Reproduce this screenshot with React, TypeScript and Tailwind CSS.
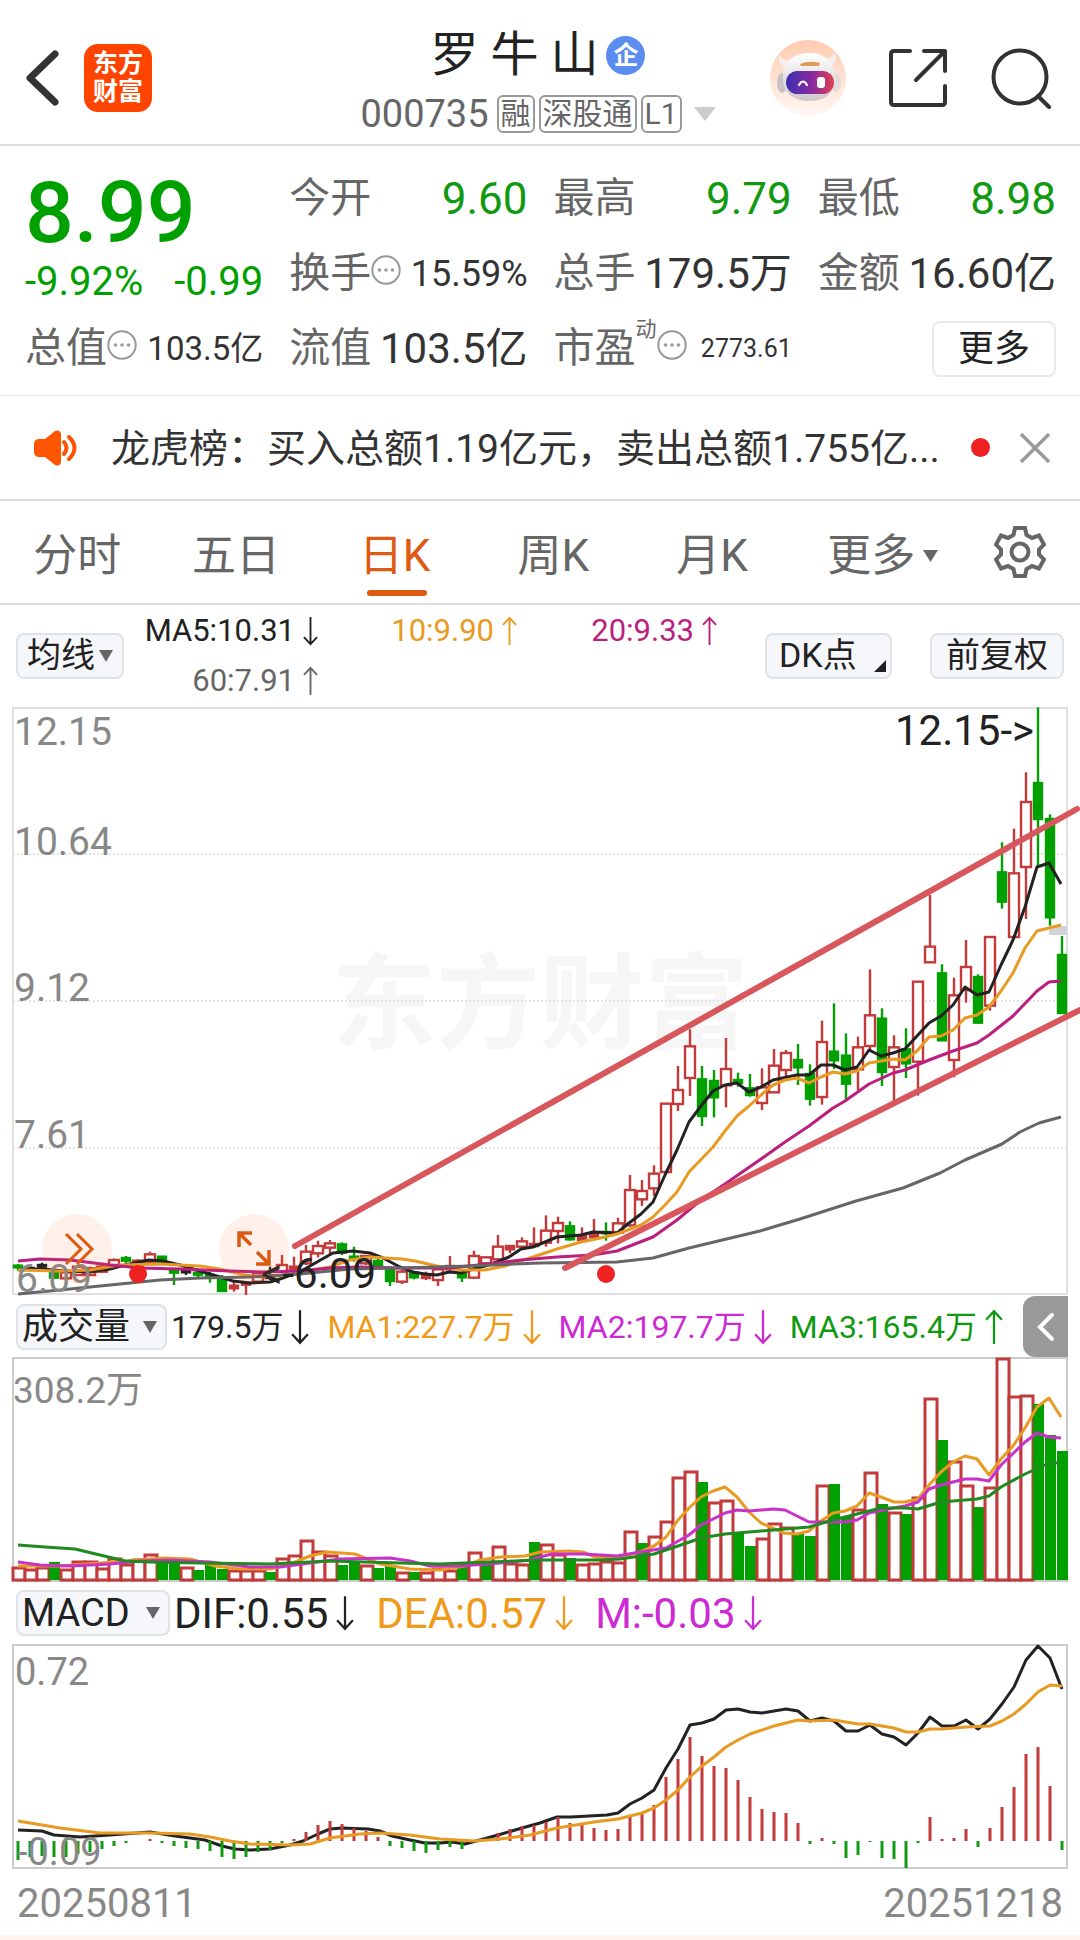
import React from 'react';
import clsx from 'clsx';

type Point = [number, number];

// body top, body bottom, high, low, all in thirds of a pixel; colour r/g/k
type Candle = [number, number, number, number, 'r' | 'g' | 'k'];

const RED = '#c23a3a';
const GREEN = '#00a000';
const INK = '#222222';
const ORANGE = '#e89a22';
const PINK = '#bb1e7e';
const VIOLET = '#c832c8';
const CHART_FONT = 'Roboto, "Noto Sans CJK SC", sans-serif';

const barX = (i: number) => 18 + i * 12;

// candles 0-31, offset 3450; 32-61, offset 3000; 62-87, offset 2100
const EARLY: Candle[] = [
  [347, 352, 342, 362, 'g'], [354, 359, 350, 364, 'k'], [345, 350, 338, 356, 'k'], [365, 383, 360, 385, 'g'],
  [367, 385, 360, 388, 'r'], [350, 375, 345, 378, 'r'], [355, 375, 350, 378, 'r'], [350, 365, 345, 368, 'r'],
  [330, 345, 325, 350, 'r'], [324, 332, 318, 340, 'g'], [332, 350, 328, 352, 'r'], [313, 335, 305, 340, 'r'],
  [320, 338, 318, 342, 'g'], [362, 368, 355, 405, 'g'], [362, 367, 352, 375, 'k'], [368, 374, 360, 385, 'g'],
  [375, 382, 365, 398, 'g'], [388, 423, 375, 425, 'g'], [407, 415, 395, 425, 'r'], [398, 404, 395, 435, 'r'],
  [370, 395, 365, 400, 'r'], [378, 384, 350, 390, 'k'], [345, 365, 315, 370, 'r'], [350, 362, 320, 370, 'r'],
  [305, 340, 285, 345, 'r'], [288, 310, 272, 322, 'r'], [280, 293, 270, 315, 'r'], [283, 308, 277, 315, 'g'],
  [320, 326, 290, 335, 'g'], [318, 340, 315, 345, 'r'], [333, 350, 325, 355, 'g'], [360, 393, 350, 408, 'g'],
];

const MIDDLE: Candle[] = [
  [815, 845, 810, 852, 'r'], [818, 832, 815, 838, 'g'], [828, 834, 815, 840, 'r'], [808, 840, 805, 858, 'r'],
  [798, 808, 768, 820, 'r'], [820, 832, 815, 846, 'g'], [768, 833, 752, 835, 'r'], [772, 790, 770, 795, 'r'],
  [740, 778, 705, 785, 'r'], [738, 748, 735, 760, 'r'], [724, 740, 712, 750, 'r'], [732, 738, 682, 740, 'r'],
  [692, 728, 646, 740, 'r'], [669, 693, 650, 730, 'r'], [679, 718, 664, 722, 'g'], [708, 720, 682, 722, 'r'],
  [703, 712, 657, 715, 'r'], [696, 700, 667, 722, 'g'], [670, 698, 653, 700, 'r'], [570, 676, 525, 680, 'r'],
  [573, 598, 540, 618, 'r'], [521, 565, 496, 588, 'r'], [311, 516, 311, 516, 'r'], [270, 312, 198, 333, 'r'],
  [139, 234, 88, 288, 'r'], [238, 348, 198, 378, 'g'], [243, 292, 210, 352, 'g'], [207, 256, 114, 322, 'r'],
  [240, 249, 218, 260, 'g'], [265, 285, 222, 290, 'g'],
];

const LATE: Candle[] = [
  [1162, 1209, 1105, 1230, 'r'], [1097, 1177, 1047, 1177, 'r'], [1059, 1110, 1050, 1135, 'r'], [1080, 1102, 1032, 1155, 'g'],
  [1122, 1196, 1093, 1217, 'g'], [1026, 1191, 962, 1214, 'r'], [1055, 1081, 910, 1107, 'g'], [1067, 1151, 1000, 1202, 'g'],
  [1042, 1108, 1010, 1170, 'r'], [946, 1038, 808, 1050, 'r'], [956, 1116, 925, 1158, 'g'], [1042, 1101, 1006, 1203, 'r'],
  [1048, 1090, 985, 1134, 'g'], [845, 1085, 845, 1187, 'r'], [740, 787, 585, 787, 'r'], [820, 1021, 793, 1021, 'g'],
  [886, 1080, 833, 1132, 'r'], [801, 870, 720, 908, 'r'], [831, 968, 823, 970, 'g'], [711, 917, 711, 932, 'r'],
  [517, 605, 427, 626, 'g'], [520, 711, 386, 711, 'r'], [306, 501, 217, 657, 'r'], [249, 357, 22, 500, 'g'],
  [357, 652, 343, 677, 'g'], [765, 939, 708, 942, 'g'],
];

const shift = (list: Candle[], by: number): Candle[] =>
  list.map(([t, b, h, l, c]) => [(t + by) / 3, (b + by) / 3, (h + by) / 3, (l + by) / 3, c]);

const CANDLES: Candle[] = [...shift(EARLY, 3450), ...shift(MIDDLE, 3000), ...shift(LATE, 2100)];

const MA5: Point[] = [
  [18, 1270], [41, 1269], [66, 1271], [90, 1272], [110, 1269], [125, 1265], [149, 1260], [163, 1261], [180, 1265], [200, 1271],
  [220, 1277], [233, 1281], [250, 1283], [270, 1282], [283, 1278], [303, 1270], [317, 1262], [333, 1253], [353, 1251], [370, 1253],
  [383, 1258], [400, 1267], [413, 1272], [425, 1274], [437, 1275], [449, 1272], [461, 1273], [473, 1269], [485, 1266], [497, 1262],
  [509, 1257], [521, 1249], [533, 1247], [545, 1242], [557, 1237], [581, 1235], [593, 1232], [617, 1233], [629, 1223], [641, 1214],
  [653, 1202], [665, 1175], [677, 1150], [689, 1122], [701, 1106], [713, 1091], [725, 1085], [737, 1083], [749, 1092], [761, 1087],
  [773, 1080], [797, 1075], [809, 1075], [821, 1065], [833, 1065], [845, 1070], [857, 1067], [869, 1050], [881, 1056], [893, 1053],
  [905, 1049], [917, 1036], [929, 1023], [941, 1016], [953, 1005], [965, 987], [977, 995], [989, 992], [1001, 965], [1013, 940],
  [1025, 907], [1037, 867], [1049, 863], [1061, 884],
];

const MA10: Point[] = [
  [18, 1270], [60, 1271], [90, 1270], [120, 1265], [160, 1264], [200, 1266], [220, 1269], [245, 1275], [260, 1277], [290, 1275],
  [300, 1272], [330, 1267], [350, 1260], [370, 1257], [385, 1258], [402, 1259], [415, 1261], [437, 1266], [461, 1270], [485, 1270],
  [505, 1266], [533, 1257], [557, 1249], [581, 1242], [605, 1237], [617, 1234], [641, 1225], [653, 1217], [665, 1205], [677, 1192],
  [689, 1172], [713, 1147], [725, 1131], [737, 1116], [749, 1106], [761, 1095], [773, 1085], [785, 1080], [797, 1078], [809, 1083],
  [821, 1077], [833, 1072], [845, 1074], [857, 1071], [869, 1063], [881, 1061], [893, 1059], [905, 1060], [917, 1051], [929, 1037],
  [941, 1036], [953, 1030], [965, 1018], [977, 1015], [989, 1007], [1001, 991], [1013, 973], [1025, 948], [1037, 931], [1049, 928],
  [1061, 925],
];

const MA20: Point[] = [
  [18, 1261], [40, 1259], [70, 1260], [110, 1265], [140, 1268], [180, 1269], [230, 1271], [260, 1272], [300, 1271], [330, 1268],
  [360, 1267], [400, 1268], [450, 1268], [497, 1263], [521, 1260], [557, 1257], [593, 1255], [617, 1251], [653, 1237], [677, 1220],
  [701, 1200], [725, 1184], [761, 1159], [785, 1142], [809, 1126], [833, 1108], [845, 1101], [869, 1084], [893, 1073], [905, 1070],
  [929, 1060], [953, 1051], [977, 1043], [989, 1035], [1013, 1016], [1037, 991], [1049, 982], [1061, 981],
];

const MA60: Point[] = [
  [18, 1294], [60, 1290], [110, 1285], [160, 1280], [200, 1278], [250, 1277], [300, 1274], [350, 1269], [400, 1268], [470, 1266],
  [540, 1263], [617, 1262], [653, 1258], [689, 1248], [760, 1231], [800, 1219], [856, 1201], [903, 1188], [940, 1173], [965, 1160],
  [1002, 1144], [1020, 1132], [1039, 1123], [1061, 1117],
];

// bar tops, in pixels
const VOLUME: [number, 'r' | 'g'][] = [
  [1567, 'r'], [1569, 'r'], [1567, 'r'], [1562, 'g'], [1569, 'r'], [1561, 'r'], [1561, 'r'], [1568, 'r'], [1558, 'r'], [1564, 'r'],
  [1559, 'r'], [1554, 'r'], [1562, 'g'], [1563, 'g'], [1567, 'r'], [1570, 'g'], [1565, 'g'], [1569, 'g'], [1570, 'r'], [1570, 'r'],
  [1570, 'r'], [1572, 'g'], [1558, 'r'], [1555, 'r'], [1540, 'r'], [1551, 'r'], [1555, 'r'], [1565, 'g'], [1562, 'g'], [1565, 'r'],
  [1568, 'g'], [1565, 'g'], [1572, 'r'], [1572, 'g'], [1572, 'r'], [1568, 'r'], [1570, 'r'], [1562, 'g'], [1552, 'r'], [1563, 'g'],
  [1546, 'r'], [1563, 'r'], [1564, 'r'], [1542, 'g'], [1544, 'r'], [1554, 'r'], [1558, 'g'], [1564, 'r'], [1563, 'r'], [1561, 'r'],
  [1562, 'r'], [1531, 'r'], [1543, 'g'], [1536, 'r'], [1521, 'r'], [1477, 'r'], [1471, 'r'], [1482, 'g'], [1502, 'r'], [1500, 'r'],
  [1533, 'g'], [1546, 'g'], [1538, 'r'], [1523, 'r'], [1527, 'r'], [1534, 'g'], [1536, 'g'], [1485, 'r'], [1484, 'g'], [1517, 'g'],
  [1509, 'r'], [1472, 'r'], [1504, 'g'], [1512, 'r'], [1514, 'g'], [1497, 'r'], [1398, 'r'], [1440, 'g'], [1461, 'r'], [1485, 'r'],
  [1507, 'g'], [1487, 'r'], [1358, 'r'], [1396, 'r'], [1395, 'r'], [1404, 'g'], [1435, 'g'], [1451, 'g'],
];

const VOL_MA1: Point[] = [
  [18, 1566], [60, 1566], [100, 1563], [125, 1561], [150, 1559], [165, 1558], [190, 1559], [215, 1566], [240, 1569], [270, 1569],
  [290, 1564], [310, 1556], [327, 1552], [355, 1554], [380, 1564], [410, 1569], [440, 1570], [465, 1566], [480, 1560], [500, 1557],
  [525, 1556], [540, 1552], [569, 1551], [583, 1552], [595, 1557], [617, 1558], [640, 1552], [654, 1546], [666, 1537], [678, 1520],
  [689, 1508], [701, 1497], [713, 1491], [725, 1487], [737, 1497], [749, 1512], [761, 1523], [784, 1533], [797, 1534], [809, 1531],
  [821, 1521], [833, 1513], [845, 1511], [857, 1506], [869, 1493], [881, 1497], [894, 1502], [905, 1502], [918, 1499], [929, 1485],
  [941, 1472], [953, 1462], [965, 1456], [977, 1459], [989, 1475], [1001, 1459], [1013, 1446], [1025, 1428], [1037, 1407],
  [1049, 1398], [1061, 1417],
];

const VOL_MA2: Point[] = [
  [18, 1562], [40, 1565], [70, 1566], [110, 1564], [140, 1561], [170, 1560], [210, 1562], [250, 1567], [280, 1567], [310, 1563],
  [340, 1559], [390, 1558], [410, 1561], [430, 1566], [460, 1566], [500, 1563], [530, 1560], [540, 1557], [552, 1554], [583, 1554],
  [617, 1556], [640, 1552], [666, 1548], [689, 1535], [701, 1525], [725, 1513], [737, 1510], [749, 1511], [773, 1509], [785, 1510],
  [809, 1522], [833, 1522], [845, 1522], [857, 1520], [869, 1513], [893, 1508], [905, 1506], [918, 1502], [929, 1489], [941, 1485],
  [965, 1479], [977, 1479], [989, 1481], [1001, 1465], [1025, 1442], [1037, 1433], [1049, 1437], [1061, 1438],
];

const VOL_MA3: Point[] = [
  [18, 1545], [45, 1547], [75, 1549], [100, 1555], [125, 1561], [150, 1562], [200, 1563], [270, 1564], [330, 1561], [400, 1563],
  [440, 1564], [490, 1562], [540, 1560], [600, 1560], [620, 1559], [654, 1554], [678, 1546], [701, 1538], [725, 1534], [761, 1531],
  [809, 1527], [833, 1520], [857, 1514], [881, 1508], [905, 1508], [918, 1509], [941, 1502], [977, 1499], [989, 1496], [1001, 1487],
  [1025, 1474], [1045, 1465], [1061, 1462],
];

// bar height above the zero line, in pixels
const MACD_BARS: number[] = [
  -19, -16, -15, -16, -16, -13, -11, -8, -5, -2, 0, 2, -2, -5, -7, -8, -10, -16, -18, -16, -11, -9, -2, 2, 9, 16, 20, 17, 13, 10,
  4, -5, -7, -10, -12, -9, -6, -8, -1, 2, 8, 12, 15, 16, 19, 24, 18, 16, 13, 11, 12, 24, 29, 36, 64, 82, 104, 85, 75, 73, 61, 44,
  32, 29, 28, 18, -3, 3, -3, -17, -14, -1, -17, -18, -27, -2, 24, 2, 3, 12, -6, 13, 34, 54, 87, 94, 55, -9,
];

const DIF: Point[] = [
  [18, 1830], [42, 1831], [54, 1835], [80, 1837], [110, 1835], [150, 1832], [175, 1836], [205, 1840], [222, 1846], [235, 1849],
  [250, 1850], [270, 1849], [290, 1845], [303, 1841], [318, 1834], [330, 1829], [342, 1828], [368, 1829], [380, 1831], [392, 1836],
  [410, 1840], [425, 1843], [440, 1843], [452, 1842], [465, 1844], [480, 1840], [498, 1835], [522, 1828], [540, 1823], [557, 1817],
  [571, 1817], [607, 1815], [618, 1813], [630, 1804], [642, 1798], [654, 1790], [666, 1768], [678, 1749], [690, 1725], [702, 1723],
  [714, 1719], [726, 1710], [738, 1709], [750, 1712], [762, 1713], [786, 1709], [798, 1711], [810, 1721], [822, 1718], [834, 1721],
  [846, 1731], [858, 1731], [870, 1725], [882, 1734], [894, 1737], [906, 1745], [918, 1733], [930, 1717], [942, 1726], [954, 1726],
  [966, 1720], [978, 1729], [990, 1719], [1002, 1704], [1014, 1687], [1026, 1660], [1038, 1646], [1050, 1658], [1062, 1689],
];

const DEA: Point[] = [
  [18, 1821], [60, 1828], [100, 1833], [150, 1833], [190, 1834], [210, 1837], [230, 1841], [250, 1844], [290, 1845], [310, 1844],
  [330, 1838], [360, 1834], [380, 1833], [410, 1835], [440, 1839], [475, 1841], [500, 1839], [530, 1835], [557, 1828], [594, 1822],
  [618, 1819], [642, 1813], [654, 1808], [666, 1800], [678, 1790], [690, 1777], [702, 1766], [714, 1757], [726, 1747], [738, 1740],
  [750, 1734], [774, 1726], [798, 1720], [810, 1721], [834, 1720], [858, 1724], [870, 1724], [894, 1728], [906, 1732], [918, 1732],
  [930, 1729], [942, 1729], [966, 1727], [990, 1726], [1002, 1721], [1014, 1714], [1026, 1704], [1038, 1692], [1050, 1685],
  [1062, 1686],
];

const Line: React.FC<{ points: Point[]; color: string }> = ({ points, color }) => (
  <polyline points={points.map((p) => p.join(',')).join(' ')} fill="none" stroke={color} strokeWidth="3" strokeLinejoin="round" />
);

const Arrow: React.FC<{ up?: boolean; large?: boolean }> = ({ up, large }) => (
  <svg
    viewBox="0 0 16 32"
    className={clsx('shrink-0', large ? 'h-9 w-[18px]' : 'h-[30px] w-[15px]', up && 'rotate-180')}
    fill="none"
    stroke="currentColor"
    strokeWidth="2"
  >
    <path d="M8 1V30M1 22.5L8 30L15 22.5" />
  </svg>
);

const Caret: React.FC<{ className: string }> = ({ className }) => (
  <svg viewBox="0 0 14 12" preserveAspectRatio="none" className={clsx('shrink-0', className)} fill="currentColor">
    <path d="M0 0H14L7 12Z" />
  </svg>
);

const InfoDots: React.FC = () => (
  <svg viewBox="0 0 30 30" className="mb-2 h-[30px] w-[30px] shrink-0 text-[#999]" fill="currentColor">
    <circle cx="15" cy="15" r="13.7" fill="none" stroke="currentColor" strokeWidth="2" />
    <circle cx="8.5" cy="15" r="1.8" />
    <circle cx="15" cy="15" r="1.8" />
    <circle cx="21.5" cy="15" r="1.8" />
  </svg>
);

const Robot: React.FC = () => (
  <svg viewBox="0 0 76 76" className="h-[76px] w-[76px]">
    <defs>
      <linearGradient id="halo" x1="0" y1="0" x2="0" y2="1">
        <stop offset="0" stopColor="#ffcbb0" />
        <stop offset="1" stopColor="#fff8f4" />
      </linearGradient>
      <linearGradient id="visor" x1="0" y1="0" x2="1" y2="0">
        <stop offset="0" stopColor="#3a2fb4" />
        <stop offset="0.55" stopColor="#8a2a9e" />
        <stop offset="1" stopColor="#e0404e" />
      </linearGradient>
      <linearGradient id="shell" x1="0" y1="0" x2="0" y2="1">
        <stop offset="0" stopColor="#ffffff" />
        <stop offset="1" stopColor="#cfc6c8" />
      </linearGradient>
    </defs>
    <circle cx="38" cy="38" r="38" fill="url(#halo)" />
    <path d="M14 28C9 24 8 19 9 15C12 19 15 20 20 21ZM60 27C66 23 67 18 65 13C62 17 59 19 54 20Z" fill="#f3eeee" />
    <ellipse cx="12" cy="43" rx="5" ry="10" fill="#c9c2c6" />
    <ellipse cx="66" cy="43" rx="5" ry="9" fill="#e6d9d9" />
    <path d="M13 36C14 20 25 13 39 13C54 13 64 21 65 36C66 52 56 61 40 61C23 61 12 53 13 36Z" fill="url(#shell)" />
    <path d="M30 24Q40 20 50 23L49 26H31Z" fill="#e09a5c" />
    <rect x="16" y="31" width="48" height="23" rx="11.5" fill="url(#visor)" />
    <path d="M29 45Q33 38 37 45" fill="none" stroke="#fff" strokeWidth="2.2" strokeLinecap="round" />
    <rect x="47" y="37" width="8" height="11" rx="3" fill="#fff" />
  </svg>
);

const Header: React.FC = () => (
  <header className="flex h-[146px] items-center border-b-2 border-[#dcdcdc] pt-5 pr-7 pb-2 pl-6">
    <div className="flex flex-1 items-center gap-6">
      <button aria-label="返回">
        <svg viewBox="0 0 36 56" className="h-14 w-9" fill="none" stroke="#333" strokeWidth="7" strokeLinecap="round" strokeLinejoin="round">
          <path d="M31 4L6 28L31 52" />
        </svg>
      </button>
      <a href="#" className="flex h-[68px] w-[68px] flex-col items-center justify-center rounded-[14px] bg-[#ff4400] text-[25px] leading-[28px] font-bold text-white">
        <span>东方</span>
        <span>财富</span>
      </a>
    </div>
    <div className="flex flex-col items-center gap-3 pt-1">
      <h1 className="flex items-center gap-2 text-[48px] leading-[56px] text-[#222]">
        罗 牛 山
        <span className="flex h-[39px] w-[39px] items-center justify-center rounded-full bg-[#5b8df0] text-[25px] leading-none font-bold text-white">企</span>
      </h1>
      <div className="flex items-center gap-1 text-[30px] leading-[34px] text-[#666]">
        <span className="mr-1 text-[38px]">000735</span>
        <span className="rounded-md border-2 border-[#999] px-[2px]">融</span>
        <span className="rounded-md border-2 border-[#999] px-[2px]">深股通</span>
        <span className="rounded-md border-2 border-[#999] px-[2px]">L1</span>
        <Caret className="ml-2 h-[14px] w-[22px] text-[#ccc]" />
      </div>
    </div>
    <div className="flex flex-1 items-center justify-end gap-[42px]">
      <button aria-label="智能助手">
        <Robot />
      </button>
      <button aria-label="分享">
        <svg viewBox="0 0 60 60" className="h-[60px] w-[60px]" fill="none" stroke="#333" strokeWidth="4" strokeLinecap="round" strokeLinejoin="round">
          <path d="M22 3H6Q3 3 3 6V54Q3 57 6 57H54Q57 57 57 54V38" />
          <path d="M36 3H57V23M57 3L28 32" />
        </svg>
      </button>
      <button aria-label="搜索">
        <svg viewBox="0 0 62 62" className="h-[62px] w-[62px]" fill="none" stroke="#333" strokeWidth="4" strokeLinecap="round">
          <circle cx="30" cy="30" r="26.5" />
          <path d="M48 49L59 60" />
        </svg>
      </button>
    </div>
  </header>
);

interface QuoteProps {
  label: string;
  value: string;
  info?: boolean;
  note?: string;
  valueClass?: string;
}

const Quote: React.FC<QuoteProps> = ({ label, value, info, note, valueClass = 'text-[42px] text-[#333]' }) => (
  <div className="flex h-[75px] items-center whitespace-nowrap">
    <span className="text-[41px] text-[#666]">{label}</span>
    {note && <sup className="-top-5 text-[21px] text-[#666]">{note}</sup>}
    {info && <InfoDots />}
    <span className={clsx('ml-auto', valueClass)}>{value}</span>
  </div>
);

const Quotes: React.FC = () => (
  <section className="grid grid-cols-4 gap-x-[26px] border-b border-[#e6e6e6] pt-[15px] pr-6 pb-[9px] pl-[25px] leading-none">
    <div className="row-span-2 flex flex-col text-[#00a000]">
      <span className="pt-[7px] text-[86px] leading-[90px] font-medium">8.99</span>
      <div className="flex justify-between pt-1 text-[40px]">
        <span>-9.92%</span>
        <span>-0.99</span>
      </div>
    </div>
    <Quote label="今开" value="9.60" valueClass="text-[44px] text-[#119911]" />
    <Quote label="最高" value="9.79" valueClass="text-[44px] text-[#119911]" />
    <Quote label="最低" value="8.98" valueClass="text-[44px] text-[#119911]" />
    <Quote label="换手" value="15.59%" info valueClass="text-[36px] text-[#333]" />
    <Quote label="总手" value="179.5万" />
    <Quote label="金额" value="16.60亿" />
    <Quote label="总值" value="103.5亿" info valueClass="text-[33px] text-[#333]" />
    <Quote label="流值" value="103.5亿" />
    <Quote label="市盈" value="2773.61" note="动" info valueClass="text-[25px] text-[#333]" />
    <button className="h-[56px] w-[124px] self-center justify-self-end rounded-lg border-2 border-[#e8eaec] text-[36px] text-[#222]">更多</button>
  </section>
);

const News: React.FC = () => (
  <section className="flex h-[105px] items-center border-b-2 border-[#dcdcdc] pr-[30px] pl-[34px]">
    <svg viewBox="0 0 44 36" className="h-9 w-11 shrink-0" fill="#ff5500">
      <path d="M4 9H11L21 1Q26 -1 27 4V32Q26 37 21 35L11 27H4Q0 26 0 22V14Q0 10 4 9Z" />
      <path d="M30 12Q35 18 30 24M35 7Q46 18 35 29" fill="none" stroke="#ff5500" strokeWidth="4" strokeLinecap="round" />
    </svg>
    <p className="ml-[33px] flex-1 pt-1 text-[39px] whitespace-nowrap text-[#333]">龙虎榜：买入总额1.19亿元，卖出总额1.755亿...</p>
    <span className="h-[19px] w-[19px] rounded-full bg-[#ee2222]" />
    <button aria-label="关闭" className="ml-[30px]">
      <svg viewBox="0 0 30 30" className="h-[30px] w-[30px]" stroke="#999" strokeWidth="3.4">
        <path d="M1 1L29 29M29 1L1 29" />
      </svg>
    </button>
  </section>
);

const PERIODS = ['分时', '五日', '日K', '周K', '月K'];

const Periods: React.FC = () => (
  <nav className="flex h-[104px] items-stretch border-b-2 border-[#dcdcdc] pt-2 text-[44px] text-[#666]">
    {PERIODS.map((period) => (
      <button
        key={period}
        className={clsx('relative flex-1 pr-1', period === '日K' && 'text-[#dd5a12]')}
      >
        {period}
        {period === '日K' && <span className="absolute bottom-[7px] left-1/2 h-[6px] w-[60px] -translate-x-1/2 rounded-full bg-[#dd5a12]" />}
      </button>
    ))}
    <button className="flex flex-1 items-center justify-center gap-2 pl-3">
      更多
      <Caret className="h-3 w-[15px]" />
    </button>
    <button aria-label="设置" className="flex w-[120px] items-center justify-center pb-2">
      <svg viewBox="0 0 52 52" className="h-[52px] w-[52px]" fill="none" stroke="#666" strokeWidth="4">
        <path d="M21 2H31L32.500 9L38 12L45 9.500L50 18.500L45 23.500V28.500L50 33.500L45 42.500L38 40L32.500 43L31 50H21L19.500 43L14 40L7 42.500L2 33.500L7 28.500V23.500L2 18.500L7 9.500L14 12L19.500 9Z" />
        <circle cx="26" cy="26" r="8.500" />
      </svg>
    </button>
  </nav>
);

const CHIP = 'flex h-[46px] items-center rounded-lg border-2 border-[#dfe2e6] bg-[#f6f7fa] text-[#222]';

const Averages: React.FC = () => (
  <div className="flex h-[101px] items-center px-4 text-[34px]">
    <button className={clsx(CHIP, 'w-[108px] justify-center gap-1')}>
      均线
      <Caret className="h-3 w-[14px] text-[#666]" />
    </button>
    <div className="ml-4 grid grid-cols-[178px_199px_200px] text-[31px] leading-[50px]">
      <span className="flex items-center justify-end gap-2 text-[#222]">MA5:10.31<Arrow /></span>
      <span className="flex items-center justify-end gap-2 text-[#e89a22]">10:9.90<Arrow up /></span>
      <span className="flex items-center justify-end gap-2 text-[#bb1e7e]">20:9.33<Arrow up /></span>
      <span className="flex items-center justify-end gap-2 text-[#666]">60:7.91<Arrow up /></span>
    </div>
    <button className={clsx(CHIP, 'ml-auto w-[127px] justify-between pr-1 pl-3')}>
      DK点
      <svg viewBox="0 0 12 12" className="mt-5 h-3 w-3" fill="#222">
        <path d="M12 0V12H0Z" />
      </svg>
    </button>
    <button className={clsx(CHIP, 'ml-[38px] w-[134px] justify-center')}>前复权</button>
  </div>
);

const PriceChart: React.FC = () => (
  <div className="relative">
    <svg viewBox="0 706 1080 590" className="block w-full overflow-visible" fontFamily={CHART_FONT}>
      <text x="540" y="1041" textAnchor="middle" fontSize="104" fontWeight="700" fill="#f6f6f6">东方财富</text>
      <rect x="13" y="708" width="1054" height="586" fill="none" stroke="#e0e0e0" strokeWidth="2" />
      {[854, 1001, 1148].map((y) => (
        <line key={y} x1="13" x2="1067" y1={y} y2={y} stroke="#dcdcdc" strokeWidth="1.500" strokeDasharray="2 2" />
      ))}
      <rect x="1049" y="926" width="18" height="9" fill="#d0d3d7" />
      {CANDLES.map(([top, bottom, high, low, kind], i) => {
        const x = barX(i);
        const color = kind === 'r' ? RED : kind === 'g' ? GREEN : INK;
        const height = bottom - top;
        const hollow = kind === 'r' && height > 4;
        return (
          <g key={i} stroke={color} strokeWidth="2.4">
            <line x1={x} x2={x} y1={high} y2={top} />
            <line x1={x} x2={x} y1={bottom} y2={low} />
            <rect x={hollow ? x - 5 : x - 4} y={top} width={hollow ? 10 : 8} height={height} fill={hollow ? '#fff' : color} />
          </g>
        );
      })}
      <Line points={MA5} color={INK} />
      <Line points={MA10} color={ORANGE} />
      <Line points={MA20} color={PINK} />
      <Line points={MA60} color="#666666" />
      <g stroke="#d8575c" strokeWidth="6" strokeLinecap="round">
        <line x1="295" y1="1246" x2="1077" y2="809" />
        <line x1="565" y1="1268" x2="1080" y2="1010" />
      </g>
      <circle cx="138" cy="1274" r="9" fill="#ee2222" />
      <circle cx="606" cy="1274" r="9" fill="#ee2222" />
      <g fontSize="39" fill="#888888">
        <text x="14" y="745">12.15</text>
        <text x="14" y="855">10.64</text>
        <text x="14" y="1001">9.12</text>
        <text x="14" y="1148">7.61</text>
        <text x="16" y="1292">6.09</text>
      </g>
      <g fontSize="42" fill={INK} textAnchor="end">
        <text x="1034" y="745">12.15-&gt;</text>
        <text x="376" y="1288">&lt;-6.09</text>
      </g>
    </svg>
    <button aria-label="展开" className="absolute bottom-[12px] left-[42px] h-[70px] w-[70px] rounded-full bg-[#ff6a2a]/10">
      <svg viewBox="0 0 70 70" fill="none" stroke="#dd5a12" strokeWidth="3">
        <path d="M24 20L39 35L24 50M35 20L50 35L35 50" />
      </svg>
    </button>
    <button aria-label="全屏" className="absolute bottom-[12px] left-[219px] h-[70px] w-[70px] rounded-full bg-[#ff6a2a]/10">
      <svg viewBox="0 0 70 70" fill="none" stroke="#dd5a12" strokeWidth="3.500">
        <path d="M20 33V19H33M20 19L32 31M50 36V50H37M50 50L38 38" />
      </svg>
    </button>
  </div>
);

const VolumeBar: React.FC = () => (
  <div className="flex h-[61px] items-center pr-3 pl-4 text-[32px] whitespace-nowrap">
    <button className={clsx(CHIP, 'w-[151px] justify-between pr-2 pl-1 text-[36px]')}>
      成交量
      <Caret className="h-3 w-[14px] text-[#666]" />
    </button>
    <div className="flex flex-1 items-center justify-between pr-5 pl-1">
      <span className="flex items-center gap-2 text-[#222]">179.5万<Arrow large /></span>
      <span className="flex items-center gap-2 text-[#f09a1a]">MA1:227.7万<Arrow large /></span>
      <span className="flex items-center gap-2 text-[#cc2ad2]">MA2:197.7万<Arrow large /></span>
      <span className="flex items-center gap-2 text-[#119911]">MA3:165.4万<Arrow up large /></span>
    </div>
    <button aria-label="收起" className="flex h-[61px] w-[45px] items-center justify-center rounded-l-xl bg-[#999]">
      <svg viewBox="0 0 18 30" className="h-[30px] w-[18px]" fill="none" stroke="#fff" strokeWidth="4" strokeLinecap="round">
        <path d="M15 3L3 15L15 27" />
      </svg>
    </button>
  </div>
);

const VolumeChart: React.FC = () => (
  <svg viewBox="0 1357 1080 225" className="block w-full" fontFamily={CHART_FONT}>
    <rect x="13" y="1358" width="1054" height="223" fill="none" stroke="#cccccc" strokeWidth="2" />
    <text x="13" y="1403" fontSize="37" fill="#888888">308.2万</text>
    {VOLUME.map(([top, kind], i) =>
      kind === 'r' ? (
        <rect key={i} x={barX(i) - 5} y={top + 1} width="12" height={1579 - top} fill="#fff" stroke={RED} strokeWidth="3" />
      ) : (
        <rect key={i} x={barX(i) - 5} y={top} width="11" height={1580 - top} fill={GREEN} />
      ),
    )}
    <Line points={VOL_MA1} color={ORANGE} />
    <Line points={VOL_MA2} color={VIOLET} />
    <Line points={VOL_MA3} color="#1f8a1f" />
  </svg>
);

const MacdBar: React.FC = () => (
  <div className="flex h-[62px] items-center px-4 text-[42px] whitespace-nowrap">
    <button className={clsx(CHIP, 'w-[154px] justify-between pr-2 pl-1 text-[38px]')}>
      MACD
      <Caret className="h-3 w-[14px] text-[#666]" />
    </button>
    <div className="flex items-center gap-[22px] pl-1">
      <span className="flex items-center gap-2 text-[#222]">DIF:0.55<Arrow large /></span>
      <span className="flex items-center gap-2 text-[#f09a1a]">DEA:0.57<Arrow large /></span>
      <span className="flex items-center gap-2 text-[#cc2ad2]">M:-0.03<Arrow large /></span>
    </div>
  </div>
);

const MacdChart: React.FC = () => (
  <svg viewBox="0 1644 1080 225" className="block w-full overflow-visible" fontFamily={CHART_FONT}>
    <rect x="13" y="1645" width="1054" height="223" fill="none" stroke="#cccccc" strokeWidth="2" />
    <Line points={DIF} color={INK} />
    {MACD_BARS.map((value, i) => (
      <rect
        key={i}
        x={barX(i) - 1.5}
        y={value > 0 ? 1841 - value : 1841}
        width="3"
        height={Math.abs(value)}
        fill={value > 0 ? RED : '#119911'}
      />
    ))}
    <Line points={DEA} color={ORANGE} />
    <g fontSize="38" fill="#888888">
      <text x="15" y="1685">0.72</text>
      <text x="17" y="1865">-0.09</text>
    </g>
  </svg>
);

const App: React.FC = () => (
  <main className="min-h-screen bg-white font-[Roboto,'Noto_Sans_CJK_SC',sans-serif]">
    <Header />
    <Quotes />
    <News />
    <Periods />
    <Averages />
    <PriceChart />
    <VolumeBar />
    <VolumeChart />
    <MacdBar />
    <MacdChart />
    <div className="flex h-[66px] items-center justify-between px-[17px] pt-1 text-[40px] text-[#888]">
      <time dateTime="2025-08-11">20250811</time>
      <time dateTime="2025-12-18">20251218</time>
    </div>
    <div className="h-[6px] bg-[#fff2ef]" />
  </main>
);

export default App;
